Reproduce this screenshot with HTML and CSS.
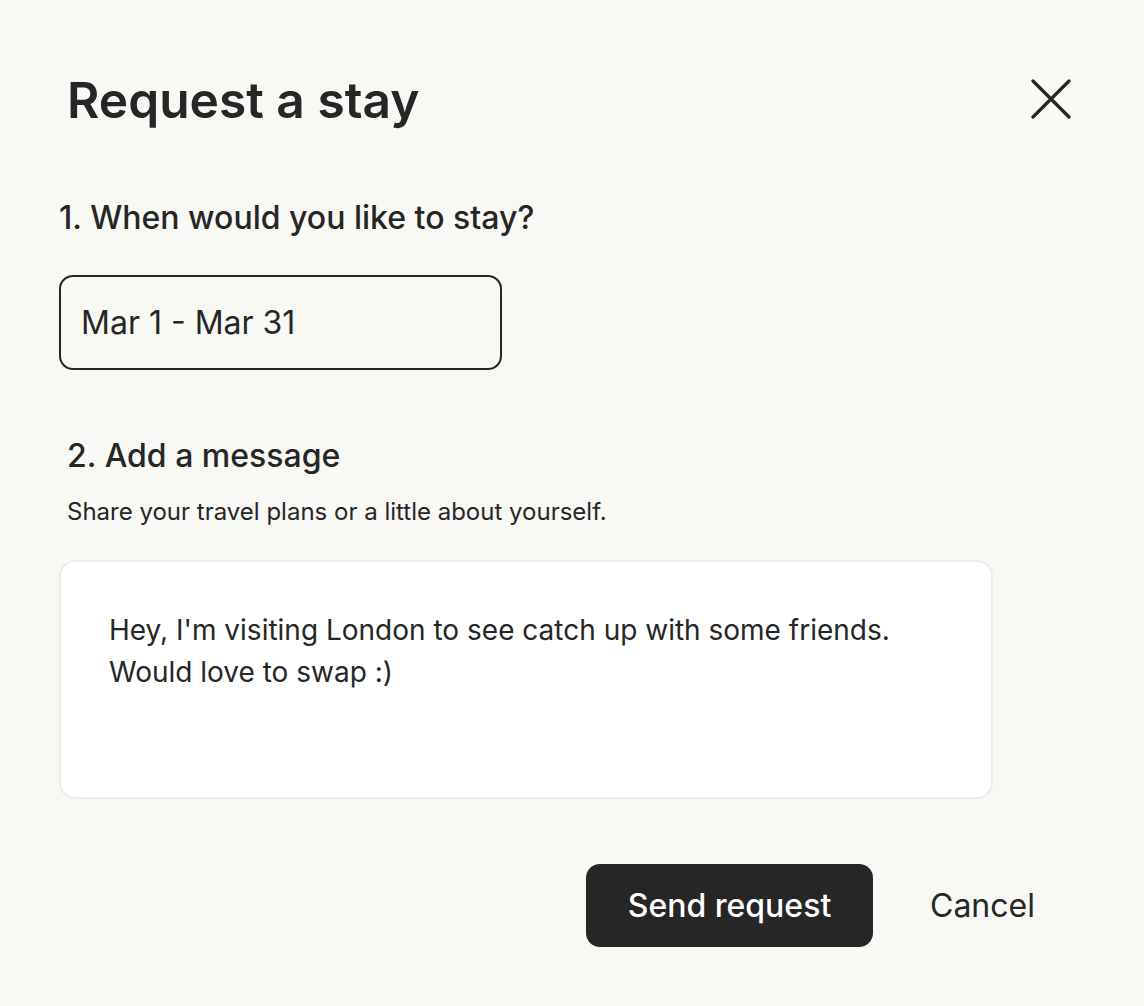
FILE: index.html
```html
<!DOCTYPE html>
<html lang="en">
<head>
<meta charset="utf-8">
<title>Request a stay</title>
<link rel="stylesheet" href="styles.css">
</head>
<body>
<div class="dialog">
  <header class="dialog-header">
    <h1 class="title">Request a stay</h1>
    <button class="close" aria-label="Close">
      <svg width="40" height="40" viewBox="0 0 40 40"><path d="M2 2 L38 38 M38 2 L2 38" stroke="#262626" stroke-width="3.2" stroke-linecap="round" fill="none"/></svg>
    </button>
  </header>
  <section class="step step-dates">
    <h2 class="step-title">1. When would you like to stay?</h2>
    <div class="date-field">Mar 1 - Mar 31</div>
  </section>
  <section class="step step-message">
    <h2 class="step-title msg-title">2. Add a message</h2>
    <p class="hint">Share your travel plans or a little about yourself.</p>
    <div class="message-box">
      <p class="message">Hey, I'm visiting London to see catch up with some friends.<br>Would love to swap :)</p>
    </div>
  </section>
  <footer class="actions">
    <button class="btn-primary">Send request</button>
    <button class="btn-link">Cancel</button>
  </footer>
</div>
</body>
</html>
```
FILE: styles.css
```css
* { box-sizing: border-box; }
html, body { margin: 0; padding: 0; }
body {
  background: #f8f8f4;
  font-family: Inter, "Liberation Sans", sans-serif;
  color: #262626;
  width: 1144px;
  height: 1006px;
  overflow: hidden;
}
.dialog {
  padding: 0 0 0 59px;
  display: flex;
  flex-direction: column;
}
.dialog-header {
  display: flex;
  justify-content: space-between;
  align-items: center;
  padding-top: 71px;
  padding-right: 73px;
}
.title {
  margin: 0 0 0 8px;
  font-size: 49.7px;
  font-weight: 600;
  line-height: 58px;
}
.close {
  background: none;
  border: 0;
  padding: 0;
  width: 40px;
  height: 40px;
  display: block;
  margin-top: -3px;
}
.close svg { display: block; }
.step-title {
  margin: 0;
  font-size: 32px;
  font-weight: 500;
  line-height: 38px;
}
.step-dates { margin-top: 70px; }
.date-field {
  margin-top: 38px;
  width: 443px;
  height: 95px;
  border: 2px solid #262626;
  border-radius: 14px;
  display: flex;
  align-items: center;
  padding-left: 20px;
  font-size: 32px;
  font-weight: 400;
}
.step-message { margin-top: 67px; }
.msg-title { margin-left: 8px; }
.hint {
  margin: 22px 0 0 8px;
  font-size: 24px;
  line-height: 29px;
}
.message-box {
  margin-top: 34px;
  width: 934px;
  height: 239px;
  background: #ffffff;
  border: 2px solid #ececea;
  border-radius: 16px;
  padding: 47px 48px;
}
.message {
  margin: 0;
  font-size: 28px;
  line-height: 42px;
}
.actions {
  margin-top: 65px;
  display: flex;
  align-items: center;
  padding-left: 527px;
}
.btn-primary {
  width: 287px;
  height: 83px;
  background: #262626;
  color: #ffffff;
  border: 0;
  border-radius: 14px;
  font-family: inherit;
  font-size: 32px;
  font-weight: 500;
}
.btn-link {
  margin-left: 57px;
  background: none;
  border: 0;
  padding: 0;
  font-family: inherit;
  font-size: 32px;
  font-weight: 400;
  color: #262626;
}
```
